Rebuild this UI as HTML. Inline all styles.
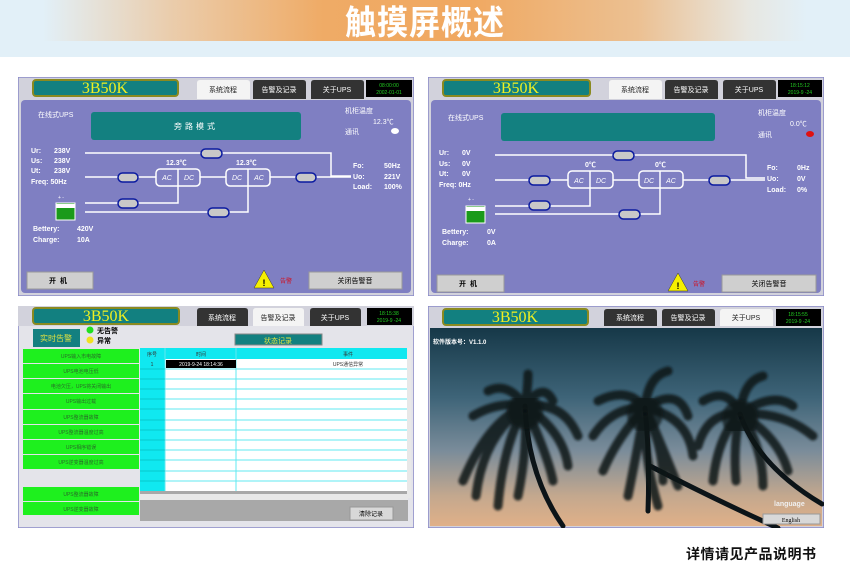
<!DOCTYPE html>
<html><head><meta charset="utf-8">
<style>
*{margin:0;padding:0;box-sizing:border-box}
body{width:850px;height:582px;background:#fff;position:relative;overflow:hidden;font-family:"Liberation Sans","Noto Sans CJK SC",sans-serif}
.hdr{position:absolute;left:0;top:0;width:850px;height:57px;background:#e2f0f8}
.band{position:absolute;left:0;top:0;width:850px;height:41px;background:linear-gradient(90deg,rgba(240,168,96,0) 5%,rgba(238,190,140,.7) 20%,#efab66 38%,#f0a860 55%,rgba(238,180,120,.8) 75%,rgba(235,225,210,.6) 88%,rgba(226,240,248,0) 95%)}
.title{position:absolute;left:0;width:850px;top:1px;text-align:center;color:#fff;font-size:31px;font-weight:bold;letter-spacing:1px;font-family:"Noto Sans CJK SC","WenQuanYi Zen Hei",sans-serif;line-height:38px;transform:scaleY(1.1)}
.panel{position:absolute}
svg text{font-family:"Liberation Sans","Noto Sans CJK SC",sans-serif}
svg text.logo{font-family:"Liberation Serif",serif}
.foot{position:absolute;left:686px;top:544px;font-size:14px;font-weight:bold;color:#111;font-family:"Noto Sans CJK SC",sans-serif;letter-spacing:0.5px}
</style></head><body>
<div class="hdr"></div><div class="band"></div>
<div class="title">触摸屏概述</div>

<!-- Panel 1 -->
<svg class="panel" style="left:18px;top:77px" width="396" height="219" viewBox="0 0 396 219">
<rect x="0" y="0" width="396" height="219" fill="#d2d2dc" stroke="#8a8ac8" stroke-width="1.5"/>
<rect x="15" y="3" width="145" height="16" rx="3" fill="#128080" stroke="#8a8a20" stroke-width="2"/>
<text class="logo" x="87" y="16" font-size="16" fill="#f0f020" text-anchor="middle">3B50K</text>
<path d="M179 22V6q0-3 3-3h47q3 0 3 3v16z" fill="#f4f4f4"/><text x="205" y="15" font-size="7" text-anchor="middle" fill="#222">系统流程</text>
<path d="M235 22V6q0-3 3-3h47q3 0 3 3v16z" fill="#333"/><text x="261" y="15" font-size="7" text-anchor="middle" fill="#fff">告警及记录</text>
<path d="M293 22V6q0-3 3-3h47q3 0 3 3v16z" fill="#333"/><text x="319" y="15" font-size="7" text-anchor="middle" fill="#fff">关于UPS</text>
<rect x="348" y="3" width="46" height="17" fill="#000"/><text x="371" y="10" font-size="5" text-anchor="middle" fill="#2c2">08:00:00</text><text x="371" y="17" font-size="5" text-anchor="middle" fill="#2c2">2002-01-01</text>
<rect x="3" y="23" width="390" height="193" rx="4" fill="#7f7fc2"/>
<text x="20" y="40" font-size="7" fill="#fff">在线式UPS</text>
<rect x="73" y="35" width="210" height="28" rx="3" fill="#138080"/>
<text x="178" y="52" font-size="8" fill="#fff" text-anchor="middle" letter-spacing="3">旁路模式</text>
<text x="327" y="36" font-size="7" fill="#fff">机柜温度</text>
<text x="355" y="47" font-size="7" fill="#fff">12.3℃</text>
<text x="327" y="57" font-size="7" fill="#fff">通讯</text>
<ellipse cx="377" cy="54" rx="4" ry="3" fill="#fff"/>
<g font-size="7" fill="#fff" font-weight="bold">
<text x="13" y="76">Ur:</text><text x="36" y="76">238V</text>
<text x="13" y="86">Us:</text><text x="36" y="86">238V</text>
<text x="13" y="96">Ut:</text><text x="36" y="96">238V</text>
<text x="13" y="107">Freq: 50Hz</text>
<text x="15" y="154">Bettery:</text><text x="59" y="154">420V</text>
<text x="15" y="165">Charge:</text><text x="59" y="165">10A</text>
<text x="335" y="91">Fo:</text><text x="366" y="91">50Hz</text>
<text x="335" y="102">Uo:</text><text x="366" y="102">221V</text>
<text x="335" y="112">Load:</text><text x="366" y="112">100%</text>
<text x="148" y="88">12.3℃</text><text x="218" y="88">12.3℃</text>
</g>
<g stroke="#fff" stroke-width="1.5" fill="none">
<path d="M67 76H313V99H333"/><path d="M67 100H138M182 100H208M252 100H333"/>
<path d="M67 126H160V109M67 135H230V109"/>
<rect x="138" y="92" width="44" height="17" rx="4"/><line x1="160" y1="92" x2="160" y2="109"/>
<rect x="208" y="92" width="44" height="17" rx="4"/><line x1="230" y1="92" x2="230" y2="109"/>
</g>
<g font-size="7" fill="#fff" font-style="italic" text-anchor="middle"><text x="149" y="103">AC</text><text x="171" y="103">DC</text><text x="219" y="103">DC</text><text x="241" y="103">AC</text></g>
<g fill="#c8c8c8" stroke="#0a1aa0" stroke-width="1.5">
<rect x="183" y="72" width="21" height="9" rx="4.5"/><rect x="100" y="96" width="20" height="9" rx="4.5"/><rect x="278" y="96" width="20" height="9" rx="4.5"/><rect x="100" y="122" width="20" height="9" rx="4.5"/><rect x="190" y="131" width="21" height="9" rx="4.5"/>
</g>
<rect x="38" y="126" width="19" height="17" fill="#1a9a1a" stroke="#fff"/><rect x="38" y="127" width="19" height="4" fill="#fff"/>
<text x="40" y="122" font-size="5" fill="#fff">+ -</text>
<rect x="9" y="195" width="66" height="17" fill="#cfcfcf" stroke="#999"/><text x="42" y="206" font-size="7" text-anchor="middle" font-weight="bold" letter-spacing="4">开机</text>
<path d="M246 193L256 211H236Z" fill="#f6f000" stroke="#333" stroke-width=".5"/><text x="246" y="209" font-size="9" text-anchor="middle" font-weight="bold">!</text>
<text x="262" y="206" font-size="6" fill="#d01020">告警</text>
<rect x="291" y="195" width="93" height="17" fill="#cfcfcf" stroke="#999"/><text x="337" y="206" font-size="7" text-anchor="middle">关闭告警音</text>
</svg>

<!-- Panel 2 -->
<svg class="panel" style="left:428px;top:77px" width="396" height="219" viewBox="0 0 396 219">
<rect x="0" y="0" width="396" height="219" fill="#d2d2dc" stroke="#8a8ac8" stroke-width="1.5"/>
<rect x="15" y="3" width="147" height="16" rx="3" fill="#128080" stroke="#8a8a20" stroke-width="2"/>
<text class="logo" x="88" y="16" font-size="16" fill="#f0f020" text-anchor="middle">3B50K</text>
<path d="M181 22V6q0-3 3-3h47q3 0 3 3v16z" fill="#f4f4f4"/><text x="207" y="15" font-size="7" text-anchor="middle" fill="#222">系统流程</text>
<path d="M237 22V6q0-3 3-3h47q3 0 3 3v16z" fill="#333"/><text x="263" y="15" font-size="7" text-anchor="middle" fill="#fff">告警及记录</text>
<path d="M295 22V6q0-3 3-3h47q3 0 3 3v16z" fill="#333"/><text x="321" y="15" font-size="7" text-anchor="middle" fill="#fff">关于UPS</text>
<rect x="350" y="3" width="44" height="17" fill="#000"/><text x="372" y="10" font-size="5" text-anchor="middle" fill="#2c2">18:15:12</text><text x="372" y="17" font-size="5" text-anchor="middle" fill="#2c2">2019-9 -24</text>
<rect x="3" y="23" width="390" height="193" rx="4" fill="#7f7fc2"/>
<text x="20" y="43" font-size="7" fill="#fff">在线式UPS</text>
<rect x="73" y="36" width="214" height="28" rx="3" fill="#138080"/>
<text x="330" y="38" font-size="7" fill="#fff">机柜温度</text>
<text x="362" y="49" font-size="7" fill="#fff">0.0℃</text>
<text x="330" y="60" font-size="7" fill="#fff">通讯</text>
<ellipse cx="382" cy="57" rx="4" ry="3" fill="#e01010"/>
<g font-size="7" fill="#fff" font-weight="bold">
<text x="11" y="78">Ur:</text><text x="34" y="78">0V</text>
<text x="11" y="89">Us:</text><text x="34" y="89">0V</text>
<text x="11" y="99">Ut:</text><text x="34" y="99">0V</text>
<text x="11" y="110">Freq: 0Hz</text>
<text x="14" y="157">Bettery:</text><text x="59" y="157">0V</text>
<text x="14" y="168">Charge:</text><text x="59" y="168">0A</text>
<text x="339" y="93">Fo:</text><text x="369" y="93">0Hz</text>
<text x="339" y="104">Uo:</text><text x="369" y="104">0V</text>
<text x="339" y="115">Load:</text><text x="369" y="115">0%</text>
<text x="157" y="90">0℃</text><text x="227" y="90">0℃</text>
</g>
<g stroke="#fff" stroke-width="1.5" fill="none">
<path d="M67 78H318V101H337"/><path d="M67 103H140M185 103H211M255 103H337"/>
<path d="M67 129H162V111M67 137H232V111"/>
<rect x="140" y="94" width="45" height="17" rx="4"/><line x1="162" y1="94" x2="162" y2="111"/>
<rect x="211" y="94" width="44" height="17" rx="4"/><line x1="232" y1="94" x2="232" y2="111"/>
</g>
<g font-size="7" fill="#fff" font-style="italic" text-anchor="middle"><text x="151" y="106">AC</text><text x="173" y="106">DC</text><text x="221" y="106">DC</text><text x="243" y="106">AC</text></g>
<g fill="#c8c8c8" stroke="#0a1aa0" stroke-width="1.5">
<rect x="185" y="74" width="21" height="9" rx="4.5"/><rect x="101" y="99" width="21" height="9" rx="4.5"/><rect x="281" y="99" width="21" height="9" rx="4.5"/><rect x="101" y="124" width="21" height="9" rx="4.5"/><rect x="191" y="133" width="21" height="9" rx="4.5"/>
</g>
<rect x="38" y="129" width="19" height="17" fill="#1a9a1a" stroke="#fff"/><rect x="38" y="130" width="19" height="4" fill="#fff"/>
<text x="40" y="124" font-size="5" fill="#fff">+ -</text>
<rect x="9" y="198" width="67" height="17" fill="#cfcfcf" stroke="#999"/><text x="42" y="209" font-size="7" text-anchor="middle" font-weight="bold" letter-spacing="4">开机</text>
<path d="M250 196L260 214H240Z" fill="#f6f000" stroke="#333" stroke-width=".5"/><text x="250" y="212" font-size="9" text-anchor="middle" font-weight="bold">!</text>
<text x="265" y="209" font-size="6" fill="#d01020">告警</text>
<rect x="294" y="198" width="94" height="17" fill="#cfcfcf" stroke="#999"/><text x="341" y="209" font-size="7" text-anchor="middle">关闭告警音</text>
</svg>

<!-- Panel 3 -->
<svg class="panel" style="left:18px;top:306px" width="396" height="222" viewBox="0 0 396 222">
<rect x="0" y="0" width="396" height="222" fill="#e4e4ea" stroke="#8a8ac8" stroke-width="1.5"/>
<rect x="0" y="0" width="396" height="20" fill="#d2d2dc"/>
<rect x="15" y="2" width="146" height="16" rx="3" fill="#128080" stroke="#8a8a20" stroke-width="2"/>
<text class="logo" x="88" y="15" font-size="16" fill="#f0f020" text-anchor="middle">3B50K</text>
<path d="M179 20V5q0-3 3-3h45q3 0 3 3v15z" fill="#333"/><text x="204" y="14" font-size="7" text-anchor="middle" fill="#fff">系统流程</text>
<path d="M235 20V5q0-3 3-3h45q3 0 3 3v15z" fill="#f4f4f4"/><text x="260" y="14" font-size="7" text-anchor="middle" fill="#222">告警及记录</text>
<path d="M292 20V5q0-3 3-3h45q3 0 3 3v15z" fill="#333"/><text x="317" y="14" font-size="7" text-anchor="middle" fill="#fff">关于UPS</text>
<rect x="349" y="2" width="45" height="17" fill="#000"/><text x="371" y="9" font-size="5" text-anchor="middle" fill="#2c2">18:15:38</text><text x="371" y="16" font-size="5" text-anchor="middle" fill="#2c2">2019-9 -24</text>
<rect x="15" y="23" width="47" height="18" fill="#138080"/><text x="38" y="35" font-size="8" text-anchor="middle" fill="#e0e040">实时告警</text>
<circle cx="72" cy="24" r="3.5" fill="#20e020"/><text x="79" y="27" font-size="7" font-weight="bold">无告警</text>
<circle cx="72" cy="34" r="3.5" fill="#f0e020"/><text x="79" y="37" font-size="7" font-weight="bold">异常</text>
<rect x="217" y="28" width="87" height="11" fill="#138080" stroke="#888"/><text x="260" y="37" font-size="7" text-anchor="middle" fill="#e0e040">状态记录</text>
<g fill="#1ef01e">
<rect x="5" y="43" width="116" height="14"/><rect x="5" y="58" width="116" height="14"/><rect x="5" y="73" width="116" height="14"/><rect x="5" y="88" width="116" height="15"/><rect x="5" y="104" width="116" height="14"/><rect x="5" y="119" width="116" height="14"/><rect x="5" y="134" width="116" height="14"/><rect x="5" y="149" width="116" height="14"/><rect x="5" y="181" width="116" height="14"/><rect x="5" y="196" width="116" height="13"/>
</g>
<g font-size="5" fill="#2a6a2a" text-anchor="middle">
<text x="63" y="52">UPS输入市电故障</text><text x="63" y="67">UPS电池电压低</text><text x="63" y="82">电池欠压，UPS将关闭输出</text><text x="63" y="97">UPS输出过载</text><text x="63" y="113">UPS整流器故障</text><text x="63" y="128">UPS整流器温度过高</text><text x="63" y="143">UPS相序错误</text><text x="63" y="158">UPS逆变器温度过高</text><text x="63" y="190">UPS整流器故障</text><text x="63" y="205">UPS逆变器故障</text>
</g>
<rect x="122" y="42" width="268" height="173" fill="#a8a8a8"/>
<rect x="122" y="42" width="267" height="143" fill="#fff"/>
<rect x="122" y="42" width="25" height="143" fill="#10e8f0"/>
<rect x="122" y="42" width="267" height="11" fill="#10e8f0"/>
<g stroke="#60e8f0" stroke-width="1">
<line x1="147" y1="63" x2="389" y2="63"/><line x1="147" y1="73" x2="389" y2="73"/><line x1="147" y1="83" x2="389" y2="83"/><line x1="147" y1="93" x2="389" y2="93"/><line x1="147" y1="103" x2="389" y2="103"/><line x1="147" y1="114" x2="389" y2="114"/><line x1="147" y1="124" x2="389" y2="124"/><line x1="147" y1="134" x2="389" y2="134"/><line x1="147" y1="144" x2="389" y2="144"/><line x1="147" y1="154" x2="389" y2="154"/><line x1="147" y1="165" x2="389" y2="165"/><line x1="147" y1="175" x2="389" y2="175"/>
<line x1="147" y1="42" x2="147" y2="185"/><line x1="218" y1="42" x2="218" y2="185"/>
</g>
<g stroke="#0aa" stroke-width=".5"><line x1="122" y1="63" x2="147" y2="63"/><line x1="122" y1="73" x2="147" y2="73"/><line x1="122" y1="83" x2="147" y2="83"/><line x1="122" y1="93" x2="147" y2="93"/><line x1="122" y1="103" x2="147" y2="103"/><line x1="122" y1="114" x2="147" y2="114"/><line x1="122" y1="124" x2="147" y2="124"/><line x1="122" y1="134" x2="147" y2="134"/><line x1="122" y1="144" x2="147" y2="144"/><line x1="122" y1="154" x2="147" y2="154"/><line x1="122" y1="165" x2="147" y2="165"/><line x1="122" y1="175" x2="147" y2="175"/></g>
<g font-size="5" text-anchor="middle" fill="#333"><text x="134" y="50">序号</text><text x="183" y="50">时间</text><text x="330" y="50">事件</text><text x="134" y="60">1</text><text x="330" y="60">UPS通信异常</text></g>
<rect x="148" y="54" width="70" height="8" fill="#000"/><text x="183" y="60" font-size="5" fill="#fff" text-anchor="middle">2019-9-24  18:14:36</text>
<rect x="122" y="188" width="268" height="6" fill="#e8e8e8"/><rect x="389" y="42" width="4" height="150" fill="#e8e8e8"/>
<rect x="332" y="201" width="43" height="13" fill="#d8d8d8" stroke="#999"/><text x="353" y="210" font-size="6" text-anchor="middle">清除记录</text>
</svg>

<!-- Panel 4 -->
<svg class="panel" style="left:428px;top:306px" width="396" height="222" viewBox="0 0 396 222">
<defs><linearGradient id="sky" x1="0" y1="0" x2="0" y2="1"><stop offset="0" stop-color="#163848"/><stop offset=".35" stop-color="#3e6478"/><stop offset=".62" stop-color="#7a8c9a"/><stop offset=".85" stop-color="#c4a88e"/><stop offset="1" stop-color="#e0b088"/></linearGradient>
<filter id="bl"><feGaussianBlur stdDeviation="1.2"/></filter></defs>
<rect x="0" y="0" width="396" height="222" fill="#d2d2dc" stroke="#8a8ac8" stroke-width="1.5"/>
<rect x="15" y="3" width="145" height="16" rx="3" fill="#128080" stroke="#8a8a20" stroke-width="2"/>
<text class="logo" x="87" y="16" font-size="16" fill="#f0f020" text-anchor="middle">3B50K</text>
<path d="M176 20V6q0-3 3-3h47q3 0 3 3v14z" fill="#333"/><text x="202" y="14" font-size="7" text-anchor="middle" fill="#fff">系统流程</text>
<path d="M234 20V6q0-3 3-3h47q3 0 3 3v14z" fill="#333"/><text x="260" y="14" font-size="7" text-anchor="middle" fill="#fff">告警及记录</text>
<path d="M292 20V6q0-3 3-3h47q3 0 3 3v14z" fill="#f4f4f4"/><text x="318" y="14" font-size="7" text-anchor="middle" fill="#222">关于UPS</text>
<rect x="348" y="3" width="45" height="17" fill="#000"/><text x="370" y="10" font-size="5" text-anchor="middle" fill="#2c2">18:15:55</text><text x="370" y="17" font-size="5" text-anchor="middle" fill="#2c2">2019-9 -24</text>
<rect x="2" y="22" width="392" height="198" fill="url(#sky)"/>
<g stroke="#0c1418" fill="none" stroke-linecap="round">
<path d="M97 100Q100 170 135 220" stroke-width="5"/>
<path d="M217 102Q222 150 220 205" stroke-width="5"/>
<path d="M222 160Q290 195 350 222" stroke-width="5"/>
<path d="M312 108Q330 160 394 198" stroke-width="5"/>
<g stroke-width="9" opacity=".85" filter="url(#bl)">
<path d="M97 100Q80 75 60 85"/><path d="M97 100Q70 95 45 110"/><path d="M97 100Q60 115 35 175"/><path d="M97 100Q55 130 48 190"/><path d="M97 100Q75 140 70 200"/><path d="M97 100Q100 80 100 68"/><path d="M97 100Q115 75 125 95"/><path d="M97 100Q135 95 150 130"/><path d="M97 100Q135 125 140 160"/><path d="M97 100Q120 150 125 175"/><path d="M97 100Q100 140 90 190"/>
<path d="M217 102Q200 80 170 95"/><path d="M217 102Q185 100 165 130"/><path d="M217 102Q190 130 175 165"/><path d="M217 102Q210 140 200 190"/><path d="M217 102Q220 70 240 65"/><path d="M217 102Q250 80 260 110"/><path d="M217 102Q260 110 265 150"/><path d="M217 102Q235 140 235 175"/><path d="M217 102Q230 130 250 180"/><path d="M217 102Q215 150 230 200"/>
<path d="M312 108Q300 80 275 95"/><path d="M312 108Q280 105 270 140"/><path d="M312 108Q290 130 285 175"/><path d="M312 108Q305 140 308 175"/><path d="M312 108Q315 75 335 70"/><path d="M312 108Q345 85 365 100"/><path d="M312 108Q355 105 385 130"/><path d="M312 108Q350 130 360 165"/><path d="M312 108Q335 140 335 180"/>
</g>
<g stroke-width="16" opacity=".7" filter="url(#bl)"><circle cx="97" cy="105" r="10"/><circle cx="217" cy="108" r="10"/><circle cx="312" cy="112" r="10"/></g>
</g>
<text x="5" y="38" font-size="6" fill="#fff" font-weight="bold">软件版本号：V1.1.0</text>
<text x="346" y="200" font-size="7" fill="#f0f0f0" font-weight="bold">language</text>
<rect x="335" y="208" width="57" height="10" fill="#d8d8d8" stroke="#999"/><text class="logo" x="363" y="216" font-size="6" text-anchor="middle">English</text>
</svg>

<div class="foot">详情请见产品说明书</div>
</body></html>
